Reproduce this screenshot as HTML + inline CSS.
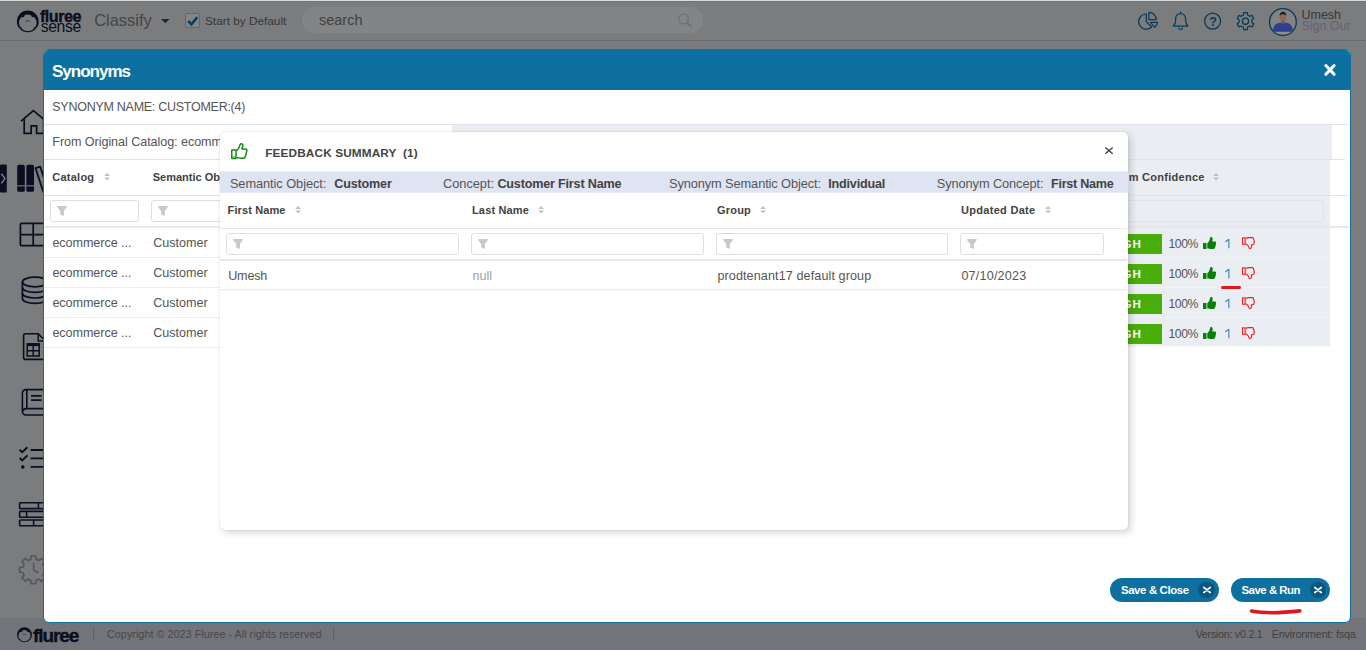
<!DOCTYPE html>
<html>
<head>
<meta charset="utf-8">
<title>Synonyms</title>
<style>
*{box-sizing:border-box;margin:0;padding:0}
html,body{width:1366px;height:650px;overflow:hidden;background:#7b7c7e;font-family:"Liberation Sans",sans-serif;}
.a{position:absolute}
.t{position:absolute;white-space:pre;line-height:1}
svg{position:absolute;overflow:visible}
#top{left:0;top:0;width:1366px;height:41px;background:#7b7c7e;border-bottom:1px solid #6b6b6c}
#topstrip{left:0;top:0;width:1366px;height:2px;background:linear-gradient(#d9dada 0,#d9dada 50%,#737476 50%,#737476 100%)}
#foot{left:0;top:618px;width:1366px;height:32px;background:#737479}
#modal{left:43px;top:49px;width:1308px;height:574px;background:#fff;border:1px solid #0e70a1;border-radius:6px 6px 6px 6px;overflow:hidden}
#mhead{left:-1px;top:-1px;width:1308px;height:41px;background:#0e70a1}
.hl{position:absolute;height:1px;background:#dfe4ea}
.lg{position:absolute;background:#eaedf2}
.inp{position:absolute;border:1px solid #dddee1;border-radius:3px;background:#fff}
#pop{left:220px;top:131.5px;width:908.2px;height:398.7px;background:#fff;border-radius:5px;box-shadow:3px 3px 7px rgba(0,0,0,.16),0 0 1.2px rgba(0,0,0,.22)}
.btn{position:absolute;height:24px;border-radius:12px;background:#0e70a1}
.bx{position:absolute;width:16.4px;height:16.4px;border-radius:50%;background:#0b5780}
</style>
</head>
<body>
<div id="top" class="a"></div><div id="topstrip" class="a"></div>
<svg style="left:0;top:0" width="1366" height="650"><path fill-rule="evenodd" fill="#0b0d20" d="M16.9,21.4A10.9,10.9 0 1 0 38.7,21.4A10.9,10.9 0 1 0 16.9,21.4Z M18.950000000000003,22.849999999999998A8.85,8.35 0 1 0 36.65,22.849999999999998A8.85,8.35 0 1 0 18.950000000000003,22.849999999999998Z"/><path d="M21.200000000000003,16.799999999999997L23.6,17.2L24.8,14.999999999999998L21.8,14.399999999999999Z" fill="#0b0d20"/><path d="M22.4,28.799999999999997l-1.0,-1.8l-0.9,0.9Z" fill="#0b0d20"/><path d="M34.4,16.799999999999997L32.0,17.2L30.8,14.999999999999998L33.8,14.399999999999999Z" fill="#0b0d20"/><path d="M33.2,28.799999999999997l1.0,-1.8l0.9,0.9Z" fill="#0b0d20"/><rect x="25.3" y="20.5" width="5.0" height="1.0" fill="#0b0d20" opacity=".55"/></svg>
<span class="t" style="left:40.0px;top:8.00px;font-size:16.2px;font-weight:bold;letter-spacing:-0.519px;color:#0b0d20;-webkit-text-stroke:0.35px #0b0d20;">fluree</span>
<span class="t" style="left:40.8px;top:18.70px;font-size:15.8px;letter-spacing:-0.433px;color:#0b0d20;">sense</span>
<span class="t" style="left:94.2px;top:11.90px;font-size:16.4px;letter-spacing:0.024px;color:#444547;">Classify</span>
<svg style="left:160.5px;top:18.6px" width="9" height="5"><path d="M0,0H8.6L4.3,4.3Z" fill="#26272a"/></svg>
<div class="a" style="left:185px;top:13px;width:14.6px;height:14.6px;border:1px solid #646567;border-radius:2px;background:#848587"></div>
<svg style="left:185px;top:13px" width="16" height="16"><path d="M3.2,8L6.5,11.3L12.2,4.2" fill="none" stroke="#0a3d5c" stroke-width="2.6"/></svg>
<span class="t" style="left:205.0px;top:16.20px;font-size:11.8px;letter-spacing:-0.002px;color:#37383a;">Start by Default</span>
<div class="a" style="left:301.5px;top:7px;width:401px;height:26px;border-radius:13px;background:#838485"></div>
<span class="t" style="left:319.0px;top:12.85px;font-size:14.5px;letter-spacing:-0.004px;color:#404246;">search</span>
<svg style="left:670px;top:10px" width="24" height="20"><circle cx="13.5" cy="9" r="4.9" fill="none" stroke="#707276" stroke-width="1.3"/><path d="M17,12.6L20.8,16.4" stroke="#707276" stroke-width="1.5" stroke-linecap="round"/></svg>
<svg style="left:0;top:0" width="1366" height="41"><g stroke="#093a56" stroke-width="1.25" stroke-linejoin="round" stroke-linecap="round" fill="none"><path d="M1146.3,21.6V14A7.6,7.6 0 1 0 1151.7,27Z"/><path d="M1148.9,19.6V12.4A7.3,7.3 0 0 1 1156.3,19.6Z"/><path d="M1150.4,22.4H1157.4A7.2,7.2 0 0 1 1154.8,27.3Z"/><path d="M1173.4,26C1174.9,24.6 1175.6,23 1175.6,20.4V19C1175.6,15.6 1177.8,13.5 1180.6,13.5C1183.4,13.5 1185.6,15.6 1185.6,19V20.4C1185.6,23 1186.3,24.6 1187.8,26Z"/><path d="M1180.6,12.2V13.4M1178.7,28.1A2,2 0 0 0 1182.5,28.1"/><circle cx="1212.6" cy="21.1" r="8.0"/></g></svg>
<span class="t" style="left:1209.3px;top:15.80px;font-size:12.6px;font-weight:bold;color:#093a56;">?</span>
<svg style="left:0;top:0" width="1366" height="41"><path d="M1243.69,12.64L1247.31,12.64L1247.51,14.97L1249.85,16.32L1251.97,15.33L1253.77,18.46L1251.86,19.80L1251.86,22.50L1253.77,23.84L1251.97,26.97L1249.85,25.98L1247.51,27.33L1247.31,29.66L1243.69,29.66L1243.49,27.33L1241.15,25.98L1239.03,26.97L1237.23,23.84L1239.14,22.50L1239.14,19.80L1237.23,18.46L1239.03,15.33L1241.15,16.32L1243.49,14.97Z" fill="none" stroke="#093a56" stroke-width="1.25" stroke-linejoin="round"/><circle cx="1245.5" cy="21.15" r="3.1" fill="none" stroke="#093a56" stroke-width="1.25"/></svg>
<svg style="left:0;top:0" width="1366" height="41"><defs><clipPath id="av"><circle cx="1282.9" cy="22" r="12.7"/></clipPath></defs><circle cx="1282.9" cy="22" r="13.4" fill="#828385" stroke="#093a56" stroke-width="1.3"/><g clip-path="url(#av)"><rect x="1268" y="31.6" width="30" height="2.6" fill="#8e8e90"/><rect x="1280.9" y="18" width="4.2" height="6" fill="#7b5d50"/><ellipse cx="1283" cy="16.6" rx="3.3" ry="4.5" fill="#8a695b"/><path d="M1279.7,16.2C1279.2,10.2 1286.8,10.2 1286.3,16.2C1285.6,13.6 1280.4,13.6 1279.7,16.2Z" fill="#17171c"/><path d="M1273,31.8C1273,27 1274.6,23.4 1280.2,22.8C1281.6,24 1284.4,24 1285.8,22.8C1291.4,23.4 1293,27 1293,31.8Z" fill="#2f3f8f"/></g></svg>
<span class="t" style="left:1301.5px;top:8.80px;font-size:12.6px;letter-spacing:-0.082px;color:#3a3636;">Umesh</span>
<span class="t" style="left:1301.5px;top:19.80px;font-size:12.6px;letter-spacing:-0.066px;color:#64627a;">Sign Out</span>
<svg style="left:0;top:0" width="60" height="620"><path d="M21,121.2L33.4,110.6L46,121.2" stroke="#0b0d20" fill="none" stroke-width="1.7"/><path d="M24.2,119V133.4H31.2V125.8H36.6V133.4H43.6V119" stroke="#0b0d20" fill="none" stroke-width="1.7"/><rect x="0" y="164.5" width="6.8" height="28" rx="1" fill="#0b0d20"/><path d="M1.4,173.6L5,178.5L1.4,183.4" stroke="#9a9b9e" stroke-width="1.1" fill="none"/><rect x="17.2" y="164.8" width="7.6" height="27" rx="1.6" fill="#0b0d20"/><rect x="17.2" y="185.3" width="7.6" height="1.1" fill="#7b7c7e"/><rect x="26.4" y="164.8" width="7.6" height="27" rx="1.6" fill="#0b0d20"/><rect x="26.4" y="185.3" width="7.6" height="1.1" fill="#7b7c7e"/><path d="M35.6,168.2L40.2,166.6L47.8,190L43.2,191.6Z" stroke="#0b0d20" fill="none" stroke-width="1.8" stroke-linejoin="round"/><rect x="20.4" y="223.3" width="26" height="22.4" rx="1.4" stroke="#0b0d20" fill="none" stroke-width="1.8"/><path d="M33.2,223.3V245.7M20.4,234.6H46.4" stroke="#0b0d20" fill="none" stroke-width="1.7"/><ellipse cx="35" cy="282" rx="12.6" ry="4.8" stroke="#0b0d20" fill="none" stroke-width="1.7"/><path d="M22.4,282V298.6C22.4,301.4 28,303.4 35,303.4S47.6,301.4 47.6,298.6V282" stroke="#0b0d20" fill="none" stroke-width="1.7"/><path d="M22.4,287.6C22.4,290.4 28,292.4 35,292.4S47.6,290.4 47.6,287.6M22.4,293.2C22.4,296 28,298 35,298S47.6,296 47.6,293.2" stroke="#0b0d20" fill="none" stroke-width="1.7"/><path d="M25.6,333.8H38.2L45.4,341V357.4A2,2 0 0 1 43.4,359.4H25.6A2,2 0 0 1 23.6,357.4V335.8A2,2 0 0 1 25.6,333.8Z" stroke="#0b0d20" fill="none" stroke-width="1.6"/><path d="M38.2,333.8V341H45.4" stroke="#0b0d20" fill="none" stroke-width="1.4"/><rect x="27.2" y="343.8" width="12" height="12.2" stroke="#0b0d20" fill="none" stroke-width="1.5"/><path d="M27.2,345H39.2" stroke="#0b0d20" fill="none" stroke-width="2.2"/><path d="M33.2,346V356M27.2,350.8H39.2" stroke="#0b0d20" fill="none" stroke-width="1.4"/><path d="M48,389.6H25.8A3.4,3.4 0 0 0 22.4,393V411.6A3.4,3.4 0 0 0 25.8,415H48M22.8,411.4A3.4,3.4 0 0 1 26,408.6H48M26.8,389.6V408.6" stroke="#0b0d20" fill="none" stroke-width="1.6"/><path d="M31,395.8H41.6M31,400.2H41.6" stroke="#0b0d20" fill="none" stroke-width="1.8"/><path d="M19.6,449.8L22.2,452.2L27.4,447.2M19.6,458L22.2,460.4L27.4,455.4" stroke="#0b0d20" fill="none" stroke-width="1.9"/><circle cx="22.8" cy="467" r="1.8" fill="#0b0d20"/><path d="M30.6,450H46M30.6,458.4H46M30.6,466.8H46" stroke="#0b0d20" fill="none" stroke-width="1.8"/><rect x="19.6" y="502.8" width="27" height="5.8" rx="0.8" stroke="#0b0d20" fill="none" stroke-width="1.6"/><rect x="19.6" y="511.4" width="27" height="5.8" rx="0.8" stroke="#0b0d20" fill="none" stroke-width="1.6"/><rect x="19.6" y="520" width="27" height="5.8" rx="0.8" stroke="#0b0d20" fill="none" stroke-width="1.6"/><path d="M38.4,502.8V508.6M26.6,511.4V517.2M33.6,520V525.8" stroke="#0b0d20" fill="none" stroke-width="1.5"/><path d="M30.99,556.01L35.81,556.01L36.09,559.34L38.90,560.50L41.45,558.35L44.85,561.75L42.70,564.30L43.86,567.11L47.19,567.39L47.19,572.21L43.86,572.49L42.70,575.30L44.85,577.85L41.45,581.25L38.90,579.10L36.09,580.26L35.81,583.59L30.99,583.59L30.71,580.26L27.90,579.10L25.35,581.25L21.95,577.85L24.10,575.30L22.94,572.49L19.61,572.21L19.61,567.39L22.94,567.11L24.10,564.30L21.95,561.75L25.35,558.35L27.90,560.50L30.71,559.34Z" stroke="#56575b" fill="none" stroke-width="1.7" stroke-linejoin="round"/><path d="M33.6,562.6V570L38.4,573" stroke="#56575b" fill="none" stroke-width="1.6"/></svg>
<div id="foot" class="a"></div>
<svg style="left:0;top:0" width="1366" height="650"><path fill-rule="evenodd" fill="#0b0d20" d="M17.0,634.8A7.5,7.5 0 1 0 32.0,634.8A7.5,7.5 0 1 0 17.0,634.8Z M18.410550458715598,635.7977064220183A6.089449541284403,5.7454128440366965 0 1 0 30.589449541284402,635.7977064220183A6.089449541284403,5.7454128440366965 0 1 0 18.410550458715598,635.7977064220183Z"/><path d="M19.958715596330276,631.6348623853211L21.610091743119266,631.9100917431192L22.43577981651376,630.3963302752293L20.371559633027523,629.983486238532Z" fill="#0b0d20"/><path d="M20.78440366972477,639.891743119266l-0.6880733944954128,-1.238532110091743l-0.6192660550458715,0.6192660550458715Z" fill="#0b0d20"/><path d="M29.041284403669724,631.6348623853211L27.389908256880734,631.9100917431192L26.56422018348624,630.3963302752293L28.628440366972477,629.983486238532Z" fill="#0b0d20"/><path d="M28.21559633027523,639.891743119266l0.6880733944954128,-1.238532110091743l0.6192660550458715,0.6192660550458715Z" fill="#0b0d20"/><rect x="22.779816513761467" y="634.1807339449541" width="3.4403669724770642" height="0.8" fill="#0b0d20" opacity=".55"/></svg>
<span class="t" style="left:32.9px;top:626.10px;font-size:19px;font-weight:bold;letter-spacing:-1.057px;color:#0b0d20;-webkit-text-stroke:0.4px #0b0d20;">fluree</span>
<div class="a" style="left:93px;top:628px;width:1px;height:12px;background:#5f6064"></div>
<span class="t" style="left:107.0px;top:628.70px;font-size:10.8px;letter-spacing:0.028px;color:#46474b;">Copyright © 2023 Fluree - All rights reserved</span>
<div class="a" style="left:333px;top:628px;width:1px;height:12px;background:#5f6064"></div>
<span class="t" style="left:1195.4px;top:628.70px;font-size:10.8px;letter-spacing:-0.283px;color:#3e3f43;">Version: v0.2.1</span>
<span class="t" style="left:1271.7px;top:628.70px;font-size:10.8px;letter-spacing:-0.179px;color:#3e3f43;">Environment: fsqa</span>
<div id="modal" class="a"><div id="mhead" class="a"></div></div>
<span class="t" style="left:52.0px;top:63.10px;font-size:17px;font-weight:bold;letter-spacing:-0.997px;color:#fff;">Synonyms</span>
<svg style="left:1320px;top:60px" width="20" height="20"><path d="M5.9,5.5L14.1,14.3M14.1,5.5L5.9,14.3" stroke="#fff" stroke-width="3" stroke-linecap="round"/></svg>
<span class="t" style="left:52.3px;top:100.85px;font-size:12.5px;letter-spacing:-0.269px;color:#555555;">SYNONYM NAME: CUSTOMER:(4)</span>
<div class="hl" style="left:44px;top:124px;width:1305px"></div>
<div class="lg" style="left:452px;top:125px;width:880px;height:34px"></div>
<span class="t" style="left:52.3px;top:135.80px;font-size:12.6px;letter-spacing:-0.065px;color:#555555;">From Original Catalog: ecommerce</span>
<div class="hl" style="left:44px;top:159px;width:1301px"></div>
<svg style="left:1128px;top:160px" width="203" height="188"><rect x="0" y="0" width="202" height="186.4" fill="#eaedf2"/></svg>
<span class="t" style="left:52.3px;top:171.60px;font-size:11px;font-weight:bold;letter-spacing:0.237px;color:#424242;">Catalog</span>
<svg style="left:103.6px;top:173.2px" width="7" height="8"><path d="M0.2,3L3.1,0L6,3Z M0.2,4.6L3.1,7.6L6,4.6Z" fill="#c0c0c0"/></svg>
<span class="t" style="left:152.8px;top:171.60px;font-size:11px;font-weight:bold;letter-spacing:-0.013px;color:#424242;">Semantic Object</span>
<span class="t" style="left:1128.7px;top:171.60px;font-size:11px;font-weight:bold;letter-spacing:0.272px;color:#424242;">m Confidence</span>
<svg style="left:1213.3px;top:173.4px" width="7" height="8"><path d="M0.2,3L3.1,0L6,3Z M0.2,4.6L3.1,7.6L6,4.6Z" fill="#c0c0c0"/></svg>
<div class="hl" style="left:44px;top:195px;width:1305px;background:#e3e4e6"></div>
<div class="inp" style="left:50px;top:200px;width:89px;height:22px"></div>
<div class="inp" style="left:151px;top:200px;width:89px;height:22px"></div>
<svg style="left:57px;top:205.8px" width="10" height="10"><path d="M0.4,0H9.5Q10.2,0.8 9.5,1.5L6.9,4.9V10L3.2,8.5V4.9L0.4,1.5Q-0.3,0.8 0.4,0Z" fill="#c9c9c9"/></svg>
<svg style="left:158.2px;top:205.8px" width="10" height="10"><path d="M0.4,0H9.5Q10.2,0.8 9.5,1.5L6.9,4.9V10L3.2,8.5V4.9L0.4,1.5Q-0.3,0.8 0.4,0Z" fill="#c9c9c9"/></svg>
<div class="a" style="left:1120px;top:200px;width:204px;height:22px;border:1px solid #e1e4e8;border-radius:3px"></div>
<div class="hl" style="left:44px;top:226px;width:1305px;height:2px;background:linear-gradient(#e2e3e6,#eceef1)"></div>
<span class="t" style="left:52.4px;top:236.80px;font-size:12.6px;letter-spacing:-0.063px;color:#555555;">ecommerce ...</span>
<span class="t" style="left:153.2px;top:236.80px;font-size:12.6px;letter-spacing:-0.002px;color:#555555;">Customer</span>
<div class="hl" style="left:44px;top:257px;width:1286px;background:#eceef1"></div>
<div class="a" style="left:1128px;top:257px;width:202px;height:1px;background:#f1f3f6"></div>
<div class="a" style="left:1122px;top:234px;width:40px;height:20px;background:#4aad0a"></div>
<span class="t" style="left:1122.6px;top:238.30px;font-size:11.6px;font-weight:bold;letter-spacing:0.800px;color:#fff;">GH</span>
<span class="t" style="left:1168.4px;top:238.00px;font-size:12.2px;letter-spacing:-0.401px;color:#555555;">100%</span>
<svg style="left:1203.1px;top:237.4px" width="14" height="13" viewBox="0 0 14 13"><rect x="0" y="5.9" width="3.5" height="6" rx="0.3" fill="#078008"/><path d="M4.3,6.2C5.8,5.2 6.6,3.2 7,1.2C7.2,0.2 8.2,-0.2 9,0.3C10,1 9.9,2.8 9.2,4.6H12C13.1,4.6 13.4,5.8 12.8,6.5C13.3,7.2 13.1,8.1 12.5,8.5C12.8,9.2 12.5,10 11.9,10.3C12.1,11.2 11.5,12 10.5,12H7.2C6,12 5.2,11.5 4.3,11.3Z" fill="#078008"/></svg>
<svg style="left:1224.8px;top:238.7px" width="5" height="10"><path d="M3.25,0H4.45V9.2H3.25V1.55L0.3,3.45V2.1Z" fill="#3c8dbc"/></svg>
<svg style="left:1241.9px;top:237.1px" width="14" height="13" viewBox="0 0 14 13"><rect x="0.55" y="0.9" width="2.6" height="6.3" fill="none" stroke="#f01c1c" stroke-width="1.1"/><path d="M3.9,1.3C4.8,0.9 5.6,0.6 6.8,0.6H10.2C11.2,0.6 11.7,1.4 11.4,2.2C12.1,2.6 12.3,3.4 11.9,4C12.5,4.5 12.5,5.4 12,5.9C12.3,6.8 11.7,7.7 10.7,7.7H9.4C9.8,9 9.7,10.6 8.8,11.4C8.1,12 7.2,11.7 7.1,10.9C6.9,9.4 6.2,8 3.9,6.7" fill="none" stroke="#f01c1c" stroke-width="1.1" stroke-linejoin="round"/></svg>
<span class="t" style="left:52.4px;top:266.80px;font-size:12.6px;letter-spacing:-0.063px;color:#555555;">ecommerce ...</span>
<span class="t" style="left:153.2px;top:266.80px;font-size:12.6px;letter-spacing:-0.002px;color:#555555;">Customer</span>
<div class="hl" style="left:44px;top:287px;width:1286px;background:#eceef1"></div>
<div class="a" style="left:1128px;top:287px;width:202px;height:1px;background:#f1f3f6"></div>
<div class="a" style="left:1122px;top:264px;width:40px;height:20px;background:#4aad0a"></div>
<span class="t" style="left:1122.6px;top:268.30px;font-size:11.6px;font-weight:bold;letter-spacing:0.800px;color:#fff;">GH</span>
<span class="t" style="left:1168.4px;top:268.00px;font-size:12.2px;letter-spacing:-0.401px;color:#555555;">100%</span>
<svg style="left:1203.1px;top:267.4px" width="14" height="13" viewBox="0 0 14 13"><rect x="0" y="5.9" width="3.5" height="6" rx="0.3" fill="#078008"/><path d="M4.3,6.2C5.8,5.2 6.6,3.2 7,1.2C7.2,0.2 8.2,-0.2 9,0.3C10,1 9.9,2.8 9.2,4.6H12C13.1,4.6 13.4,5.8 12.8,6.5C13.3,7.2 13.1,8.1 12.5,8.5C12.8,9.2 12.5,10 11.9,10.3C12.1,11.2 11.5,12 10.5,12H7.2C6,12 5.2,11.5 4.3,11.3Z" fill="#078008"/></svg>
<svg style="left:1224.8px;top:268.7px" width="5" height="10"><path d="M3.25,0H4.45V9.2H3.25V1.55L0.3,3.45V2.1Z" fill="#3c8dbc"/></svg>
<svg style="left:1241.9px;top:267.1px" width="14" height="13" viewBox="0 0 14 13"><rect x="0.55" y="0.9" width="2.6" height="6.3" fill="none" stroke="#f01c1c" stroke-width="1.1"/><path d="M3.9,1.3C4.8,0.9 5.6,0.6 6.8,0.6H10.2C11.2,0.6 11.7,1.4 11.4,2.2C12.1,2.6 12.3,3.4 11.9,4C12.5,4.5 12.5,5.4 12,5.9C12.3,6.8 11.7,7.7 10.7,7.7H9.4C9.8,9 9.7,10.6 8.8,11.4C8.1,12 7.2,11.7 7.1,10.9C6.9,9.4 6.2,8 3.9,6.7" fill="none" stroke="#f01c1c" stroke-width="1.1" stroke-linejoin="round"/></svg>
<span class="t" style="left:52.4px;top:296.80px;font-size:12.6px;letter-spacing:-0.063px;color:#555555;">ecommerce ...</span>
<span class="t" style="left:153.2px;top:296.80px;font-size:12.6px;letter-spacing:-0.002px;color:#555555;">Customer</span>
<div class="hl" style="left:44px;top:317px;width:1286px;background:#eceef1"></div>
<div class="a" style="left:1128px;top:317px;width:202px;height:1px;background:#f1f3f6"></div>
<div class="a" style="left:1122px;top:294px;width:40px;height:20px;background:#4aad0a"></div>
<span class="t" style="left:1122.6px;top:298.30px;font-size:11.6px;font-weight:bold;letter-spacing:0.800px;color:#fff;">GH</span>
<span class="t" style="left:1168.4px;top:298.00px;font-size:12.2px;letter-spacing:-0.401px;color:#555555;">100%</span>
<svg style="left:1203.1px;top:297.4px" width="14" height="13" viewBox="0 0 14 13"><rect x="0" y="5.9" width="3.5" height="6" rx="0.3" fill="#078008"/><path d="M4.3,6.2C5.8,5.2 6.6,3.2 7,1.2C7.2,0.2 8.2,-0.2 9,0.3C10,1 9.9,2.8 9.2,4.6H12C13.1,4.6 13.4,5.8 12.8,6.5C13.3,7.2 13.1,8.1 12.5,8.5C12.8,9.2 12.5,10 11.9,10.3C12.1,11.2 11.5,12 10.5,12H7.2C6,12 5.2,11.5 4.3,11.3Z" fill="#078008"/></svg>
<svg style="left:1224.8px;top:298.7px" width="5" height="10"><path d="M3.25,0H4.45V9.2H3.25V1.55L0.3,3.45V2.1Z" fill="#3c8dbc"/></svg>
<svg style="left:1241.9px;top:297.1px" width="14" height="13" viewBox="0 0 14 13"><rect x="0.55" y="0.9" width="2.6" height="6.3" fill="none" stroke="#f01c1c" stroke-width="1.1"/><path d="M3.9,1.3C4.8,0.9 5.6,0.6 6.8,0.6H10.2C11.2,0.6 11.7,1.4 11.4,2.2C12.1,2.6 12.3,3.4 11.9,4C12.5,4.5 12.5,5.4 12,5.9C12.3,6.8 11.7,7.7 10.7,7.7H9.4C9.8,9 9.7,10.6 8.8,11.4C8.1,12 7.2,11.7 7.1,10.9C6.9,9.4 6.2,8 3.9,6.7" fill="none" stroke="#f01c1c" stroke-width="1.1" stroke-linejoin="round"/></svg>
<span class="t" style="left:52.4px;top:326.80px;font-size:12.6px;letter-spacing:-0.063px;color:#555555;">ecommerce ...</span>
<span class="t" style="left:153.2px;top:326.80px;font-size:12.6px;letter-spacing:-0.002px;color:#555555;">Customer</span>
<div class="hl" style="left:44px;top:347px;width:1084px;background:#eceef1"></div>
<div class="a" style="left:1122px;top:324px;width:40px;height:20px;background:#4aad0a"></div>
<span class="t" style="left:1122.6px;top:328.30px;font-size:11.6px;font-weight:bold;letter-spacing:0.800px;color:#fff;">GH</span>
<span class="t" style="left:1168.4px;top:328.00px;font-size:12.2px;letter-spacing:-0.401px;color:#555555;">100%</span>
<svg style="left:1203.1px;top:327.4px" width="14" height="13" viewBox="0 0 14 13"><rect x="0" y="5.9" width="3.5" height="6" rx="0.3" fill="#078008"/><path d="M4.3,6.2C5.8,5.2 6.6,3.2 7,1.2C7.2,0.2 8.2,-0.2 9,0.3C10,1 9.9,2.8 9.2,4.6H12C13.1,4.6 13.4,5.8 12.8,6.5C13.3,7.2 13.1,8.1 12.5,8.5C12.8,9.2 12.5,10 11.9,10.3C12.1,11.2 11.5,12 10.5,12H7.2C6,12 5.2,11.5 4.3,11.3Z" fill="#078008"/></svg>
<svg style="left:1224.8px;top:328.7px" width="5" height="10"><path d="M3.25,0H4.45V9.2H3.25V1.55L0.3,3.45V2.1Z" fill="#3c8dbc"/></svg>
<svg style="left:1241.9px;top:327.1px" width="14" height="13" viewBox="0 0 14 13"><rect x="0.55" y="0.9" width="2.6" height="6.3" fill="none" stroke="#f01c1c" stroke-width="1.1"/><path d="M3.9,1.3C4.8,0.9 5.6,0.6 6.8,0.6H10.2C11.2,0.6 11.7,1.4 11.4,2.2C12.1,2.6 12.3,3.4 11.9,4C12.5,4.5 12.5,5.4 12,5.9C12.3,6.8 11.7,7.7 10.7,7.7H9.4C9.8,9 9.7,10.6 8.8,11.4C8.1,12 7.2,11.7 7.1,10.9C6.9,9.4 6.2,8 3.9,6.7" fill="none" stroke="#f01c1c" stroke-width="1.1" stroke-linejoin="round"/></svg>
<div class="a" style="left:1221px;top:285.7px;width:19.6px;height:3.8px;border-radius:2px;background:#e0171f"></div>
<div class="btn" style="left:1110px;top:578px;width:109px"></div><div class="bx" style="left:1198.2px;top:581.8px"></div>
<div class="btn" style="left:1231px;top:578px;width:99px"></div><div class="bx" style="left:1309.6px;top:581.8px"></div>
<span class="t" style="left:1120.9px;top:585.40px;font-size:11.4px;font-weight:bold;letter-spacing:-0.353px;color:#fff;">Save &amp; Close</span>
<span class="t" style="left:1241.5px;top:585.40px;font-size:11.4px;font-weight:bold;letter-spacing:-0.475px;color:#fff;">Save &amp; Run</span>
<svg style="left:1201.6px;top:585.1px" width="10" height="10"><path d="M1.8,2.5L8.2,7.5M8.2,2.5L1.8,7.5" stroke="#fff" stroke-width="1.7" stroke-linecap="round"/></svg>
<svg style="left:1313px;top:585.1px" width="10" height="10"><path d="M1.8,2.5L8.2,7.5M8.2,2.5L1.8,7.5" stroke="#fff" stroke-width="1.7" stroke-linecap="round"/></svg>
<svg style="left:1248px;top:606px" width="58" height="10"><path d="M3.6,5C14,7 32,7.2 51.8,4.9" fill="none" stroke="#e0171f" stroke-width="3.6" stroke-linecap="round"/></svg>
<div id="pop" class="a"></div>
<svg style="left:231.4px;top:142.8px" width="18" height="17" viewBox="0 0 18 17"><rect x="0.75" y="7" width="4.3" height="8.5" rx="0.5" fill="none" stroke="#0f8c12" stroke-width="1.5"/><path d="M1.9,13.9H3.8" stroke="#0f8c12" stroke-width="1.1"/><path d="M5.6,7.5C7.2,6.5 8.4,4.4 8.9,2.2C9.2,0.9 10,0.7 10.6,0.8C11.8,1 12,2.2 11.8,3.2C11.6,4.2 11.2,5 10.9,5.9H14.4C15.4,5.9 15.9,6.6 15.8,7.4C15.5,9.8 14.8,12.4 14,14.2C13.7,14.9 13.2,15.3 12.4,15.3H9.4C8.2,15.3 7.2,14.5 5.6,14.4" fill="none" stroke="#0f8c12" stroke-width="1.5" stroke-linejoin="round"/></svg>
<span class="t" style="left:265.3px;top:148.20px;font-size:11.8px;font-weight:bold;letter-spacing:0.117px;color:#444;">FEEDBACK SUMMARY  (1)</span>
<svg style="left:1100px;top:140px" width="20" height="20"><path d="M5.3,7.4L12.7,13.7M12.7,7.4L5.3,13.7" stroke="#454545" stroke-width="1.35"/></svg>
<svg style="left:220px;top:171px" width="909" height="23"><rect x="0" y="0.5" width="908.6" height="21.3" fill="#dfe4f3"/></svg>
<span class="t" style="left:229.9px;top:178.20px;font-size:12.8px;letter-spacing:-0.066px;color:#555555;">Semantic Object:</span>
<span class="t" style="left:334.3px;top:177.80px;font-size:12.6px;font-weight:bold;letter-spacing:-0.176px;color:#424242;">Customer</span>
<span class="t" style="left:443.0px;top:178.20px;font-size:12.8px;letter-spacing:-0.029px;color:#555555;">Concept:</span>
<span class="t" style="left:497.4px;top:177.80px;font-size:12.6px;font-weight:bold;letter-spacing:-0.181px;color:#424242;">Customer First Name</span>
<span class="t" style="left:669.0px;top:178.20px;font-size:12.8px;letter-spacing:-0.099px;color:#555555;">Synonym Semantic Object:</span>
<span class="t" style="left:828.2px;top:177.80px;font-size:12.6px;font-weight:bold;letter-spacing:-0.180px;color:#424242;">Individual</span>
<span class="t" style="left:936.8px;top:178.20px;font-size:12.8px;letter-spacing:-0.097px;color:#555555;">Synonym Concept:</span>
<span class="t" style="left:1051.0px;top:177.80px;font-size:12.6px;font-weight:bold;letter-spacing:-0.252px;color:#424242;">First Name</span>
<span class="t" style="left:227.6px;top:204.60px;font-size:11px;font-weight:bold;letter-spacing:0.115px;color:#424242;">First Name</span>
<svg style="left:294.6px;top:206.3px" width="7" height="8"><path d="M0.2,3L3.1,0L6,3Z M0.2,4.6L3.1,7.6L6,4.6Z" fill="#c0c0c0"/></svg>
<span class="t" style="left:472.0px;top:204.60px;font-size:11px;font-weight:bold;letter-spacing:0.152px;color:#424242;">Last Name</span>
<svg style="left:538px;top:206.3px" width="7" height="8"><path d="M0.2,3L3.1,0L6,3Z M0.2,4.6L3.1,7.6L6,4.6Z" fill="#c0c0c0"/></svg>
<span class="t" style="left:717.0px;top:204.60px;font-size:11px;font-weight:bold;letter-spacing:0.201px;color:#424242;">Group</span>
<svg style="left:760px;top:206.3px" width="7" height="8"><path d="M0.2,3L3.1,0L6,3Z M0.2,4.6L3.1,7.6L6,4.6Z" fill="#c0c0c0"/></svg>
<span class="t" style="left:961.0px;top:204.60px;font-size:11px;font-weight:bold;letter-spacing:0.300px;color:#424242;">Updated Date</span>
<svg style="left:1044.5px;top:206.3px" width="7" height="8"><path d="M0.2,3L3.1,0L6,3Z M0.2,4.6L3.1,7.6L6,4.6Z" fill="#c0c0c0"/></svg>
<div class="hl" style="left:220px;top:228px;width:907px;background:#e6e8ec"></div>
<div class="inp" style="left:226px;top:233px;width:233px;height:22px"></div>
<svg style="left:232.8px;top:239.4px" width="10" height="10"><path d="M0.4,0H9.5Q10.2,0.8 9.5,1.5L6.9,4.9V10L3.2,8.5V4.9L0.4,1.5Q-0.3,0.8 0.4,0Z" fill="#c9c9c9"/></svg>
<div class="inp" style="left:471px;top:233px;width:233px;height:22px"></div>
<svg style="left:477.8px;top:239.4px" width="10" height="10"><path d="M0.4,0H9.5Q10.2,0.8 9.5,1.5L6.9,4.9V10L3.2,8.5V4.9L0.4,1.5Q-0.3,0.8 0.4,0Z" fill="#c9c9c9"/></svg>
<div class="inp" style="left:716px;top:233px;width:232px;height:22px"></div>
<svg style="left:722.8px;top:239.4px" width="10" height="10"><path d="M0.4,0H9.5Q10.2,0.8 9.5,1.5L6.9,4.9V10L3.2,8.5V4.9L0.4,1.5Q-0.3,0.8 0.4,0Z" fill="#c9c9c9"/></svg>
<div class="inp" style="left:960px;top:233px;width:144px;height:22px"></div>
<svg style="left:966.8px;top:239.4px" width="10" height="10"><path d="M0.4,0H9.5Q10.2,0.8 9.5,1.5L6.9,4.9V10L3.2,8.5V4.9L0.4,1.5Q-0.3,0.8 0.4,0Z" fill="#c9c9c9"/></svg>
<div class="hl" style="left:220px;top:259px;width:907px;height:2px;background:linear-gradient(#dfe2e7,#eceef2)"></div>
<span class="t" style="left:228.2px;top:269.80px;font-size:12.6px;letter-spacing:-0.182px;color:#555555;">Umesh</span>
<span class="t" style="left:472.4px;top:269.80px;font-size:12.6px;letter-spacing:-0.004px;color:#a0a0a0;">null</span>
<span class="t" style="left:717.4px;top:269.80px;font-size:12.6px;letter-spacing:0.103px;color:#555555;">prodtenant17 default group</span>
<span class="t" style="left:961.4px;top:269.80px;font-size:12.6px;letter-spacing:0.194px;color:#555555;">07/10/2023</span>
<svg style="left:220px;top:288px" width="908" height="4"><rect x="0" y="1.2" width="907" height="1.1" fill="#e6e8ec"/></svg>
</body>
</html>
